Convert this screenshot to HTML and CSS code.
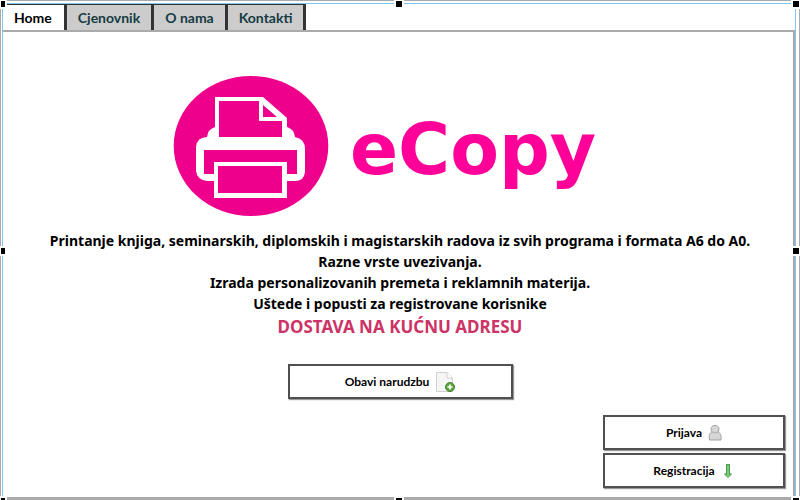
FILE: index.html
```html
<!DOCTYPE html>
<html lang="bs">
<head>
<meta charset="utf-8">
<title>eCopy</title>
<link rel="stylesheet" href="styles.css">
</head>
<body>
<div class="window">
  <nav class="tabs">
    <a class="tab active" href="#home">Home</a>
    <a class="tab" href="#cjenovnik">Cjenovnik</a>
    <a class="tab" href="#onama">O nama</a>
    <a class="tab" href="#kontakti">Kontakti</a>
  </nav>
  <main class="pane">
    <header class="brand">
      <svg class="logo" viewBox="0 0 156 142" aria-hidden="true">
        <ellipse cx="78" cy="71" rx="77.300" ry="70" fill="#ee008c"/>
        <path fill="#fff" d="M42 22H90L114 43V52Q121 54 122 62Q132 64 132 74V97Q131 106 122 106H114V123H41V106H34Q24 105 23 96V72Q24 62 34 62Q35 54 42 52Z"/>
        <path fill="#ee008c" d="M46 26H86V46H109V62H46ZM90 30L104 42H90ZM31 75H124V99H114V87H41V99H31ZM45 91H109V118H45Z"/>
      </svg>
      <h1 class="name">eCopy</h1>
    </header>
    <section class="intro">
      <p>Printanje knjiga, seminarskih, diplomskih i magistarskih radova iz svih programa i formata A6 do A0.</p>
      <p>Razne vrste uvezivanja.</p>
      <p>Izrada personalizovanih premeta i reklamnih materija.</p>
      <p>Uštede i popusti za registrovane korisnike</p>
      <p class="delivery">DOSTAVA NA KUĆNU ADRESU</p>
    </section>
    <button class="btn order" type="button">Obavi narudzbu
      <svg width="20" height="22" viewBox="0 0 20 22" aria-hidden="true">
        <path d="M1.500 1.500H12L17.500 7V20.500H1.500Z" fill="#f5f5f5" stroke="#d0d0d0"/>
        <path d="M12 1.500V7H17.500" fill="#fff" stroke="#d0d0d0"/>
        <circle cx="15" cy="16" r="4.500" fill="#5fa53f" stroke="#467f30"/>
        <path d="M15 13.500V18.500M12.500 16H17.500" stroke="#fff" stroke-width="1.600"/>
      </svg>
    </button>
    <div class="account">
      <button class="btn" type="button">Prijava
        <svg width="14" height="18" viewBox="0 0 14 18" aria-hidden="true">
          <path d="M4 8C2 5 3 1.500 7 1.500S12 5 10 8C12.500 9 13.500 11 13 16H1.500C.8 11 1.500 9 4 8Z" fill="#d6d6d6" stroke="#a0a0a0"/>
          <path d="M4 8Q7 10 10 8" fill="none" stroke="#b0b0b0"/>
        </svg>
      </button>
      <button class="btn" type="button">Registracija
        <svg width="14" height="18" viewBox="0 0 14 18" aria-hidden="true">
          <path d="M5.500 2.500H8.500V12H10.500L7 15.500L3.500 12H5.500Z" fill="#7acb70" stroke="#46994a"/>
        </svg>
      </button>
    </div>
  </main>
  <i class="grip top left"></i><i class="grip top center"></i><i class="grip top right"></i>
  <i class="grip middle left"></i><i class="grip middle right"></i>
  <i class="grip bottom left"></i><i class="grip bottom center"></i><i class="grip bottom right"></i>
</div>
</body>
</html>
```
FILE: styles.css
```css
* { box-sizing: border-box; }
body { margin: 0; background: #fff; color: #000; }
.window {
  position: relative;
  display: flex;
  flex-direction: column;
  min-height: 100vh;
  padding: 3px 4px 0 1px;
  border: solid #aaa;
  border-width: 1px 1px 3px;
}
.window::before {
  content: "";
  position: absolute;
  inset: 2px 3px 0 1px;
  border: 1px solid #82c4ec;
  border-bottom: 0;
  pointer-events: none;
}
.tabs {
  display: flex;
  height: 26px;
  font: bold 14px/26px Lato, sans-serif;
}
.tab {
  height: 28px;
  padding: 0 11px;
  border-top: 1px solid #333;
  border-right: 3px solid #333;
  background: #ccc;
  color: #163b43;
  text-decoration: none;
}
.tab.active { padding: 0 12px; background: #fff; color: #000; }
.pane {
  flex: 1;
  display: flex;
  flex-direction: column;
  align-items: center;
  padding: 43px 8px 9px 13px;
  border: solid #aaa;
  border-width: 2px 2px 0 0;
}
.brand { display: flex; align-items: center; gap: 21px; margin-right: 31px; }
.logo { width: 156px; height: 142px; }
.name {
  margin: 0;
  padding-top: 8px;
  color: #ff0099;
  font: bold 71px/84px "DejaVu Sans", sans-serif;
}
.intro {
  margin-top: 13px;
  text-align: center;
  font: bold 14px/21px "Comic Sans MS", "Noto Sans", sans-serif;
}
.intro p { margin: 0; }
.intro .delivery { color: #cc3366; font-size: 17px; line-height: 26px; }
.btn {
  display: flex;
  align-items: center;
  justify-content: center;
  gap: 6px;
  width: 182px;
  height: 35px;
  padding: 0;
  border: 2px solid #505052;
  background: #fff;
  color: #000;
  box-shadow: 1px 1px 1px #999;
  font: bold 12px/16px Lato, sans-serif;
}
.order { width: 225px; margin-top: 24px; }
.account { display: grid; gap: 3px; margin: auto 0 0 auto; }
.grip {
  position: absolute;
  width: 6px;
  height: 6px;
  background: #000;
  box-shadow: 0 0 0 2px #fff;
}
.grip.top { top: 0; }
.grip.middle { top: calc(50% + 2px); margin-top: -3px; }
.grip.bottom { bottom: -3px; height: 2px; }
.grip.left { left: 0; width: 4px; }
.grip.center { left: 50%; margin-left: -4px; }
.grip.right { right: 0; }
```
